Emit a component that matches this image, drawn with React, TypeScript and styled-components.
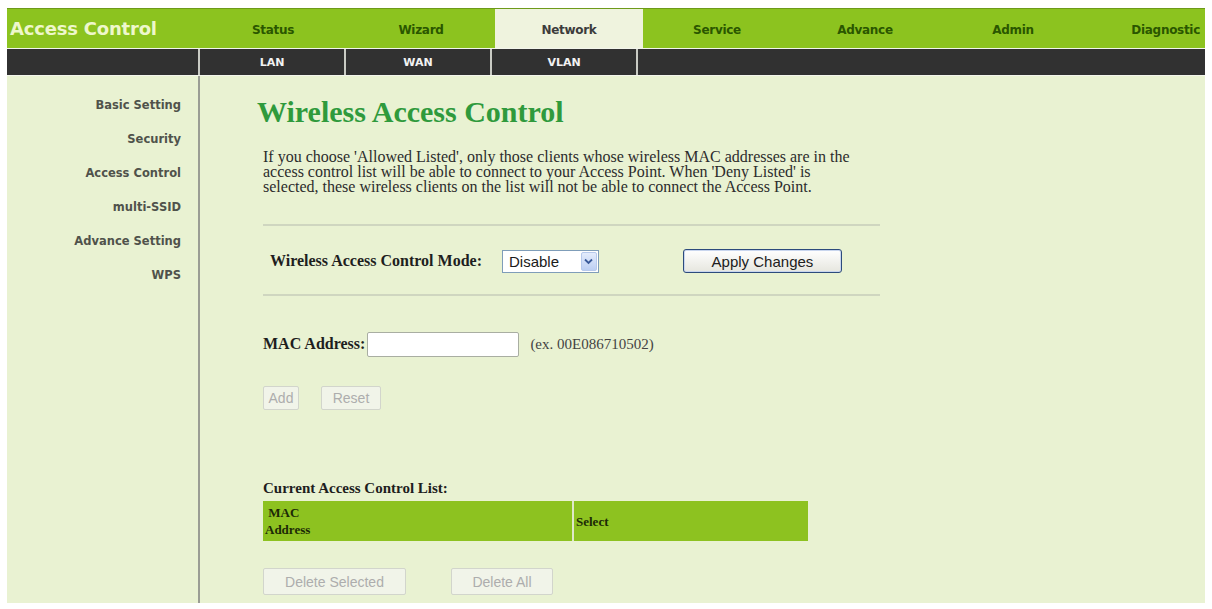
import styled, { createGlobalStyle } from 'styled-components'

const GlobalStyle = createGlobalStyle`
	html, body {
		margin: 0;
		padding: 0;
		background: #ffffff;
	}
	* {
		box-sizing: border-box;
	}
`

const topTabs = ['Status', 'Wizard', 'Network', 'Service', 'Advance', 'Admin', 'Diagnostic']
const subTabs = ['LAN', 'WAN', 'VLAN']
const sideLinks = ['Basic Setting', 'Security', 'Access Control', 'multi-SSID', 'Advance Setting', 'WPS']

export default function App() {
	return (
		<>
			<GlobalStyle />
			<Page>
				<Frame>
					<TopBar>
						<Brand>Access Control</Brand>
						{topTabs.map((tab, i) => (
							<Tab key={tab} $active={tab === 'Network'} $last={i === topTabs.length - 1}>
								{tab}
							</Tab>
						))}
					</TopBar>
					<SubBar>
						<SubSpacer />
						{subTabs.map((tab) => (
							<SubTab key={tab}>{tab}</SubTab>
						))}
						<SubRest />
					</SubBar>
					<Body>
						<Sidebar>
							{sideLinks.map((link) => (
								<SideLink key={link}>{link}</SideLink>
							))}
						</Sidebar>
						<Main>
							<Title>Wireless Access Control</Title>
							<Intro>
								If you choose 'Allowed Listed', only those clients whose wireless MAC addresses are in the
								<br />
								access control list will be able to connect to your Access Point. When 'Deny Listed' is
								<br />
								selected, these wireless clients on the list will not be able to connect the Access Point.
							</Intro>
							<Divider $top={30} />
							<ModeRow>
								<Label>Wireless Access Control Mode:</Label>
								<Select>
									<span>Disable</span>
									<SelectArrow>
										<svg width="9" height="7" viewBox="0 0 9 7">
											<path d="M1 1.5 L4.5 5 L8 1.5" fill="none" stroke="#3a5a9a" strokeWidth="1.8" />
										</svg>
									</SelectArrow>
								</Select>
								<ApplyButton>Apply Changes</ApplyButton>
							</ModeRow>
							<Divider $top={20} />
							<MacRow>
								<Label $indent={0}>MAC Address:</Label>
								<MacInput />
								<Hint>(ex. 00E086710502)</Hint>
							</MacRow>
							<ButtonRow $top={29} $gap={22}>
								<GhostButton $width={36} $height={24}>Add</GhostButton>
								<GhostButton $width={60} $height={24}>Reset</GhostButton>
							</ButtonRow>
							<ListLabel>Current Access Control List:</ListLabel>
							<ListTable>
								<HeadCell $width={309}>
									<span>&nbsp;MAC</span>
									<span>Address</span>
								</HeadCell>
								<HeadCell $width={234}>Select</HeadCell>
							</ListTable>
							<ButtonRow $top={27} $gap={45}>
								<GhostButton $width={143} $height={27}>Delete Selected</GhostButton>
								<GhostButton $width={102} $height={27}>Delete All</GhostButton>
							</ButtonRow>
						</Main>
					</Body>
				</Frame>
			</Page>
		</>
	)
}

const Page = styled.div`
	padding: 8px 7px 6px 7px;
	background: #ffffff;
`

const Frame = styled.div`
	display: flex;
	flex-direction: column;
	width: 1198px;
	height: 595px;
	background: #f3f5ec;
`

const TopBar = styled.div`
	display: flex;
	height: 40px;
	background: #8cc31f;
	border-top: 1px solid #6e9a1a;
`

const Brand = styled.div`
	display: flex;
	align-items: center;
	width: 192px;
	padding-left: 3px;
	font-family: 'DejaVu Sans', sans-serif;
	font-weight: bold;
	font-size: 18px;
	letter-spacing: -0.2px;
	color: #eef7cc;
`

const Tab = styled.div<{ $active?: boolean; $last?: boolean }>`
	display: flex;
	align-items: center;
	justify-content: ${(p) => (p.$last ? 'flex-end' : 'center')};
	width: ${(p) => (p.$last ? 'auto' : '148px')};
	flex: ${(p) => (p.$last ? '1' : 'none')};
	padding-right: ${(p) => (p.$last ? '5px' : '0')};
	padding-top: 2px;
	font-family: 'DejaVu Sans', sans-serif;
	font-weight: bold;
	font-size: 12px;
	letter-spacing: -0.3px;
	color: ${(p) => (p.$active ? '#3c3c3c' : '#2a5600')};
	background: ${(p) => (p.$active ? '#eff3de' : 'transparent')};
`

const SubBar = styled.div`
	display: flex;
	height: 26px;
	margin-top: 1px;
	background: #313131;
`

const SubSpacer = styled.div`
	width: 191px;
`

const SubTab = styled.div`
	display: flex;
	align-items: center;
	justify-content: center;
	width: 146px;
	border-left: 2px solid #c9cbc4;
	font-family: 'DejaVu Sans', sans-serif;
	font-weight: bold;
	font-size: 11px;
	color: #f2f2f2;
`

const SubRest = styled.div`
	flex: 1;
	border-left: 2px solid #c9cbc4;
`

const Body = styled.div`
	display: flex;
	flex: 1;
	margin-top: 1px;
	background: #e9f2d2;
`

const Sidebar = styled.nav`
	display: flex;
	flex-direction: column;
	align-items: flex-end;
	width: 193px;
	padding: 12px 17px 0 0;
	border-right: 2px solid #9a9d94;
`

const SideLink = styled.div`
	height: 34px;
	line-height: 34px;
	font-family: 'DejaVu Sans', sans-serif;
	font-weight: bold;
	font-size: 11.5px;
	color: #50524b;
`

const Main = styled.main`
	display: flex;
	flex-direction: column;
	align-items: flex-start;
	padding: 21px 0 0 63px;
	font-family: 'Liberation Serif', 'Times New Roman', serif;
	color: #262626;
`

const Title = styled.h1`
	margin: 0 0 0 -6px;
	height: 30px;
	line-height: 30px;
	font-size: 30px;
	font-weight: bold;
	color: #2f9a3c;
	white-space: nowrap;
`

const Intro = styled.p`
	margin: 22px 0 0 0;
	font-size: 16px;
	line-height: 15px;
	color: #2c2c2c;
	white-space: nowrap;
`

const Divider = styled.div<{ $top: number }>`
	width: 617px;
	height: 2px;
	margin-top: ${(p) => p.$top}px;
	background: #cfd6c0;
`

const ModeRow = styled.div`
	display: flex;
	align-items: center;
	height: 26px;
	margin-top: 22px;
`

const Label = styled.span<{ $indent?: number }>`
	margin-left: ${(p) => p.$indent ?? 7}px;
	font-size: 16px;
	font-weight: bold;
	color: #1e1e1e;
	white-space: nowrap;
`

const Select = styled.div`
	display: flex;
	align-items: center;
	justify-content: space-between;
	width: 97px;
	height: 23px;
	margin-left: 20px;
	padding: 1px 1px 1px 6px;
	background: #ffffff;
	border: 1px solid #7f9db9;
	font-family: 'Liberation Sans', Arial, sans-serif;
	font-size: 15px;
	color: #1a1a1a;
`

const SelectArrow = styled.div`
	display: flex;
	align-items: center;
	justify-content: center;
	width: 16px;
	height: 19px;
	background: linear-gradient(#e4ecfc, #bccff3);
	border: 1px solid #b7c9ec;
	border-radius: 2px;
`

const ApplyButton = styled.button`
	width: 159px;
	height: 24px;
	margin-left: 84px;
	padding: 0;
	background: linear-gradient(#ffffff, #e6e6de);
	border: 1px solid #2d4b7c;
	border-radius: 3px;
	box-shadow: inset 0 0 0 1px #c9d6ee;
	font-family: 'Liberation Sans', Arial, sans-serif;
	font-size: 15px;
	color: #202020;
`

const MacRow = styled.div`
	display: flex;
	align-items: center;
	height: 26px;
	margin-top: 35px;
`

const MacInput = styled.input`
	width: 152px;
	height: 25px;
	margin-left: 2px;
	background: #ffffff;
	border: 1px solid #a9aea2;
	border-radius: 2px;
`

const Hint = styled.span`
	margin-left: 11px;
	font-size: 15px;
	color: #444444;
`

const ButtonRow = styled.div<{ $top: number; $gap: number }>`
	display: flex;
	gap: ${(p) => p.$gap}px;
	margin-top: ${(p) => p.$top}px;
`

const GhostButton = styled.button<{ $width: number; $height: number }>`
	width: ${(p) => p.$width}px;
	height: ${(p) => p.$height}px;
	padding: 0;
	background: #f1f4e9;
	border: 1px solid #d2d5cc;
	border-radius: 2px;
	font-family: 'Liberation Sans', Arial, sans-serif;
	font-size: 14px;
	color: #adadad;
`

const ListLabel = styled.div`
	height: 16px;
	margin-top: 70px;
	line-height: 16px;
	font-size: 15px;
	font-weight: bold;
	color: #1e1e1e;
`

const ListTable = styled.div`
	display: flex;
	gap: 2px;
	margin-top: 5px;
	height: 40px;
	background: #dfe8c9;
`

const HeadCell = styled.div<{ $width: number }>`
	display: flex;
	flex-direction: column;
	justify-content: center;
	width: ${(p) => p.$width}px;
	padding-left: 2px;
	background: #8dc220;
	font-size: 13px;
	line-height: 17px;
	font-weight: bold;
	color: #1c2a06;
`
